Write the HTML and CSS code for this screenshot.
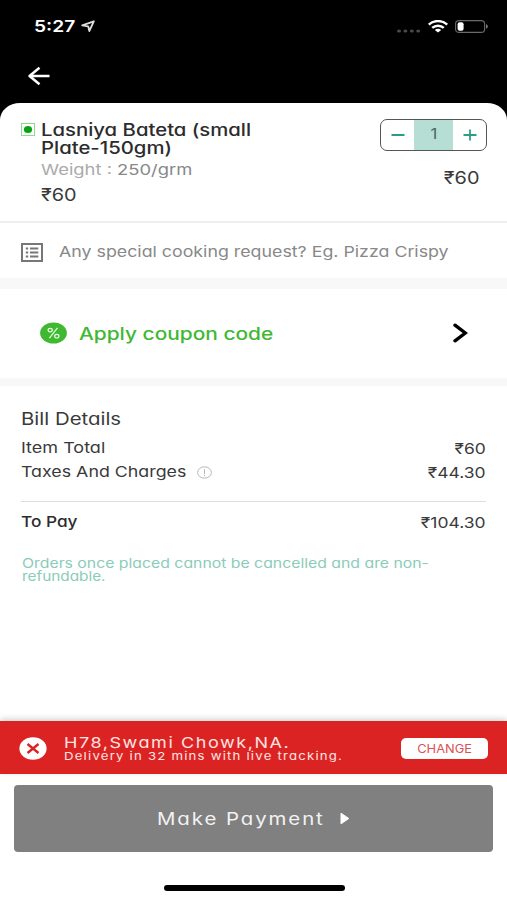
FILE: index.html
```
<!DOCTYPE html>
<html lang="en">
<head>
<meta charset="utf-8">
<title>Checkout</title>
<link rel="stylesheet" href="styles.css">
</head>
<body>
<div class="screen">
  <header class="top">
    <div class="status">
      <span class="wide time">5:27</span>
      <svg class="location" width="15" height="13" viewBox="0 0 15 13"><path d="M1.2 5.4 12.8 1.3 8.3 11 7.2 6.3Z" fill="none" stroke="#ddd" stroke-width="1.8" stroke-linejoin="round"/></svg>
      <div class="signals">
        <svg width="24" height="4" viewBox="0 0 24 4" fill="#4a4a4a"><ellipse cx="2" cy="2" rx="2" ry="1.6"/><ellipse cx="8.4" cy="2" rx="2" ry="1.6"/><ellipse cx="14.8" cy="2" rx="2" ry="1.6"/><ellipse cx="21.2" cy="2" rx="2" ry="1.6"/></svg>
        <svg class="wifi" width="20" height="13" viewBox="0 0 20 13"><g fill="none" stroke="#fff" stroke-width="2.5"><path d="M.8 4.7C6-.1 14-.1 19.2 4.7"/><path d="M4.2 7.9C7.5 4.9 12.5 4.9 15.8 7.9"/></g><path d="M6.8 9.9C8.6 8.3 11.4 8.3 13.2 9.9L10 12.6Z" fill="#fff"/></svg>
        <svg class="battery" width="34" height="13" viewBox="0 0 34 13"><rect x=".6" y=".6" width="29" height="11.8" rx="3.6" ry="3" fill="none" stroke="#6a6a6a" stroke-width="1.1"/><rect x="2.6" y="2.2" width="6" height="8.6" rx="2" fill="#fff"/><path d="M31 4.3C33.5 5 33.5 8 31 8.7Z" fill="#777"/></svg>
      </div>
    </div>
    <svg class="back" width="24" height="20" viewBox="0 0 24 20"><path d="M12.5 1.8 2.5 10 12.5 18.2M2.5 10H22.5" fill="none" stroke="#fff" stroke-width="2.5" stroke-linejoin="round"/></svg>
  </header>

  <main class="sheet">
    <section class="item">
      <svg class="veg" width="14" height="13" viewBox="0 0 14 13"><rect x=".5" y=".5" width="13" height="12" fill="#fff" stroke="#8bdc8c"/><ellipse cx="7" cy="6.5" rx="4.1" ry="3.5" fill="#08a410"/></svg>
      <div class="info">
        <h1 class="title"><span class="wide">Lasniya Bateta (small</span><br><span class="wide">Plate-150gm)</span></h1>
        <p class="wide weight"><span class="label">Weight :</span> 250/grm</p>
        <p class="wide price">₹60</p>
      </div>
      <div class="side">
        <div class="stepper">
          <button class="step"><svg width="14" height="12" viewBox="0 0 14 12"><path d="M.5 6H13.5" stroke="#2a9d86" stroke-width="1.8"/></svg></button>
          <span class="count"><span class="wide">1</span></span>
          <button class="step"><svg width="14" height="12" viewBox="0 0 14 12"><path d="M.5 6H13.5M7 .5V11.5" stroke="#2a9d86" stroke-width="1.8"/></svg></button>
        </div>
        <p class="wide price">₹60</p>
      </div>
    </section>

    <section class="request">
      <svg width="22" height="19" viewBox="0 0 22 19" fill="#777"><rect x="1" y="1" width="20" height="17" fill="none" stroke="#777" stroke-width="2"/><path d="M4.8 4.5h2.4v2H4.8zM4.8 8.5h2.4v2H4.8zM4.8 12.5h2.4v2H4.8zM9 4.5h8.3v2H9zM9 8.5h8.3v2H9zM9 12.5h8.3v2H9z"/></svg>
      <span class="wide hint">Any special cooking request? Eg. Pizza Crispy</span>
    </section>

    <section class="coupon">
      <svg class="percent" width="27" height="22" viewBox="0 0 27 22"><ellipse cx="13.5" cy="11" rx="13.4" ry="10.6" fill="#40b832"/><g fill="none" stroke="#e6ffe2" stroke-width="1.2"><path d="M17.5 5.8 9.4 16.2"/><ellipse cx="10.2" cy="8.1" rx="2.1" ry="1.8"/><ellipse cx="16.8" cy="14.2" rx="2.1" ry="1.8"/></g></svg>
      <span class="wide apply">Apply coupon code</span>
      <svg class="chevron" width="15" height="20" viewBox="0 0 15 20"><path d="M2 2.2 12.3 10 2 17.8" fill="none" stroke="#000" stroke-width="3.4" stroke-linecap="round"/></svg>
    </section>

    <section class="bill">
      <h2 class="wide heading">Bill Details</h2>
      <div class="row"><span class="wide">Item Total</span><span class="wide amount">₹60</span></div>
      <div class="row"><span class="wide taxes">Taxes And Charges</span><svg class="about" width="15" height="13" viewBox="0 0 15 13" fill="none" stroke="#b8b8b8"><ellipse cx="7.5" cy="6.5" rx="6.9" ry="5.7"/><path d="M7.5 3.2V8M7.5 8.9V10"/></svg><span class="wide amount">₹44.30</span></div>
      <div class="row total"><span class="wide pay">To Pay</span><span class="wide amount">₹104.30</span></div>
      <p class="note"><span class="wide">Orders once placed cannot be cancelled and are non-</span><br><span class="wide last">refundable.</span></p>
    </section>
  </main>

  <footer>
    <div class="address">
      <svg width="28" height="23" viewBox="0 0 28 23"><ellipse cx="14" cy="11.5" rx="13.6" ry="11.2" fill="#fff"/><path d="M8.5 7 19.5 16M19.5 7 8.5 16" stroke="#d92323" stroke-width="2.3"/></svg>
      <div class="where">
        <p class="wide place">H78,Swami Chowk,NA.</p>
        <p class="wide eta">Delivery in 32 mins with live tracking.</p>
      </div>
      <button class="change"><span class="wide">CHANGE</span></button>
    </div>
    <button class="payment"><span class="wide">Make Payment</span><svg width="10" height="13" viewBox="0 0 10 13"><path d="M1 1.2 8.8 6.5 1 11.8Z" fill="#fff" stroke="#fff" stroke-linejoin="round"/></svg></button>
    <div class="home"></div>
  </footer>
</div>
</body>
</html>
```

FILE: styles.css
```
* {
  box-sizing: border-box;
}

body {
  margin: 0;
  background: #fff;
  color: #3a3a3a;
  font-family: Inter, "Liberation Sans", sans-serif;
  font-feature-settings: "cv11";
}

h1, h2, p {
  margin: 0;
  font-weight: inherit;
}

button {
  padding: 0;
  border: 0;
  color: inherit;
  font: inherit;
  font-feature-settings: inherit;
}

svg {
  display: block;
  flex: none;
}

/* Extended letterforms: --w is the horizontal stretch */
.wide {
  display: inline-block;
  width: max-content;
  white-space: nowrap;
  transform: scaleX(var(--w, 1.2));
  transform-origin: left center;
}

.screen {
  display: flex;
  flex-direction: column;
  height: 900px;
  background: linear-gradient(#000 150px, #fff 150px);
}

.top {
  height: 103px;
  color: #fff;
}

.status {
  display: flex;
  height: 52px;
  padding: 0 18px 0 34px;
}

.wide.time {
  width: 47px;
  font-size: 16px;
  font-weight: 600;
  line-height: 53px;
}

.location {
  margin-top: 20px;
}

.signals {
  display: flex;
  align-items: flex-start;
  margin-left: auto;
  padding-top: 20px;
}

.signals svg:first-child {
  margin-top: 9px;
}

.wifi {
  margin: 0 7px 0 7px;
}

.back {
  margin: 14px 0 0 27px;
}

.sheet {
  flex: 1;
  border-radius: 20px 20px 0 0 / 17px 17px 0 0;
  background: #fff;
}

.item {
  display: flex;
  height: 120px;
  padding: 18px 20px 0 21px;
  border-bottom: 2px solid #eee;
}

.veg {
  margin: 2px 6px 0 0;
}

.info {
  padding: 1px 0 0 .3px;
}

.title {
  color: #2c2c2c;
  font-size: 17px;
  font-weight: 500;
  line-height: 17.5px;
}

.title .wide {
  --w: 1.195;
}

.weight {
  --w: 1.225;
  display: block;
  margin-top: 3px;
  color: #888;
  font-size: 15px;
  line-height: 20px;
}

.label {
  color: #aaa;
}

.price {
  --w: 1.17;
  display: block;
  margin-top: 4.6px;
  font-size: 17px;
  line-height: 20px;
}

.side {
  margin: -2px 0 0 auto;
}

.stepper {
  display: flex;
  width: 107px;
  height: 32px;
  overflow: hidden;
  border: 1.5px solid #555;
  border-radius: 7px;
}

.step {
  display: flex;
  flex: 1;
  align-items: center;
  justify-content: center;
  background: none;
}

.count {
  width: 39px;
  background: #b7ded5;
  color: #4b6761;
  font-size: 14px;
  line-height: 28px;
  text-align: center;
}

.count .wide {
  transform-origin: center;
}

.side .price {
  margin: 17px 8px 0 auto;
  transform-origin: right center;
}

.request {
  display: flex;
  align-items: center;
  height: 66px;
  padding: 3px 0 0 21px;
  border-bottom: 11px solid #f8f8f8;
}

.hint {
  --w: 1.186;
  margin: -2px 0 0 16px;
  color: #888;
  font-size: 15px;
}

.coupon {
  display: flex;
  align-items: center;
  height: 97px;
  padding: 0 39px 0 40px;
  border-bottom: 8px solid #f8f8f8;
}

.percent,
.chevron {
  margin-bottom: 2px;
}

.apply {
  --w: 1.228;
  margin-left: 12px;
  color: #40b832;
  font-size: 17px;
  font-weight: 500;
}

.chevron {
  margin-left: auto;
}

.bill {
  padding: 21px 21px 0;
  line-height: 24px;
}

.heading {
  display: block;
  margin-bottom: 5px;
  font-size: 17px;
  line-height: 24px;
}

.row {
  display: flex;
  align-items: center;
  height: 24px;
  font-size: 15px;
}

.taxes {
  --w: 1.187;
}

.about {
  margin-left: 37px;
}

.amount {
  --w: 1.165;
  margin-left: auto;
  padding-top: 1px;
  transform-origin: right center;
}

.total {
  height: 33px;
  margin-top: 17px;
  padding-top: 8px;
  border-top: 1px solid #ddd;
}

.pay {
  --w: 1.15;
  color: #2c2c2c;
  font-weight: 500;
}

.note {
  --w: 1.215;
  margin: 23px 0 0 1px;
  color: #8accb8;
  font-size: 13px;
  line-height: 13.3px;
}

.last {
  --w: 1.18;
}

.address {
  display: flex;
  height: 53px;
  padding: 0 19px;
  background: #dc2323;
  box-shadow: 0 -2px 6px rgba(0, 0, 0, .18);
  color: #ffe3e1;
}

.address > svg {
  margin-top: 16px;
}

.where {
  margin-left: 17px;
  padding-top: 14px;
}

.place,
.eta {
  display: block;
}

.place {
  font-size: 15px;
  letter-spacing: 1.3px;
  line-height: 15px;
}

.eta {
  font-size: 11px;
  letter-spacing: 1px;
  line-height: 12px;
}

.change {
  --w: 1.07;
  width: 87px;
  height: 21px;
  margin: 17px 0 0 auto;
  border-radius: 5px;
  background: #fff;
  color: #d95355;
  font-size: 12px;
  line-height: 20px;
}

.change .wide {
  transform-origin: center;
}

.payment {
  display: flex;
  align-items: center;
  width: 479px;
  height: 67px;
  margin: 11px 14px 0;
  padding-left: 143px;
  border-radius: 4px;
  background: #808080;
  color: #f2f2f2;
  font-size: 17px;
  letter-spacing: 1.6px;
}

.payment svg {
  margin-left: 43px;
}

.home {
  width: 181px;
  height: 6px;
  margin: 33px auto 9px 164px;
  border-radius: 3px;
  background: #000;
}
```
